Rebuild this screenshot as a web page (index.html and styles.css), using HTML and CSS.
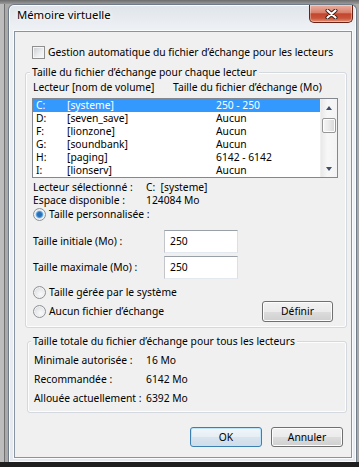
FILE: index.html
```html
<!DOCTYPE html>
<html lang="fr">
<head>
<meta charset="utf-8">
<title>Mémoire virtuelle</title>
<link rel="stylesheet" href="styles.css">
</head>
<body>
<div class="desk">
  <div class="window">
    <div class="titlebar">
      <span class="title">Mémoire virtuelle</span>
      <span class="close">
        <svg width="13" height="10" viewBox="0 0 13 10">
          <path d="M2.5 1.5 L10.5 8.5 M10.5 1.5 L2.5 8.5" stroke="#3a1c16" stroke-width="4" stroke-linecap="round"/>
          <path d="M2.5 1.5 L10.5 8.5 M10.5 1.5 L2.5 8.5" stroke="#ffffff" stroke-width="2.2" stroke-linecap="round"/>
        </svg>
      </span>
    </div>
    <div class="client">
      <div class="check-row"><span class="checkbox"></span><span>Gestion automatique du fichier d’échange pour les lecteurs</span></div>

      <fieldset class="group g1">
        <legend>Taille du fichier d’échange pour chaque lecteur</legend>
        <div class="list-head"><span class="h-drive">Lecteur [nom de volume]</span><span>Taille du fichier d’échange (Mo)</span></div>
        <div class="listbox">
          <div class="rows">
            <div class="row sel"><span class="c-letter">C:</span><span class="c-name">[systeme]</span><span>250 - 250</span></div>
            <div class="row"><span class="c-letter">D:</span><span class="c-name">[seven_save]</span><span>Aucun</span></div>
            <div class="row"><span class="c-letter">F:</span><span class="c-name">[lionzone]</span><span>Aucun</span></div>
            <div class="row"><span class="c-letter">G:</span><span class="c-name">[soundbank]</span><span>Aucun</span></div>
            <div class="row"><span class="c-letter">H:</span><span class="c-name">[paging]</span><span>6142 - 6142</span></div>
            <div class="row"><span class="c-letter">I:</span><span class="c-name">[lionserv]</span><span>Aucun</span></div>
          </div>
          <div class="scrollbar">
            <span class="sb-btn"><span class="tri up"></span></span>
            <span class="thumb"></span>
            <span class="sb-space"></span>
            <span class="sb-btn"><span class="tri down"></span></span>
          </div>
        </div>
        <div class="info"><span class="k">Lecteur sélectionné :</span><span>C:&nbsp; [systeme]</span></div>
        <div class="info"><span class="k">Espace disponible :</span><span>124084 Mo</span></div>
        <div class="radio-row r1"><span class="radio on"></span><span>Taille personnalisée :</span></div>
        <div class="field f1"><span class="f-label">Taille initiale (Mo) :</span><span class="input">250</span></div>
        <div class="field f2"><span class="f-label">Taille maximale (Mo) :</span><span class="input">250</span></div>
        <div class="radio-row r2"><span class="radio"></span><span>Taille gérée par le système</span></div>
        <div class="radio-row r3"><span class="radio"></span><span>Aucun fichier d’échange</span><span class="btn define">Définir</span></div>
      </fieldset>

      <fieldset class="group g2">
        <legend>Taille totale du fichier d’échange pour tous les lecteurs</legend>
        <div class="total"><span class="k2">Minimale autorisée :</span><span>16 Mo</span></div>
        <div class="total"><span class="k2">Recommandée :</span><span>6142 Mo</span></div>
        <div class="total"><span class="k2">Allouée actuellement :</span><span>6392 Mo</span></div>
      </fieldset>

      <div class="actions">
        <span class="btn default">OK</span>
        <span class="btn">Annuler</span>
      </div>
    </div>
  </div>
</div>
<div class="floor"></div>
</body>
</html>
```

FILE: styles.css
```css
* { box-sizing: border-box; }
html, body { margin: 0; padding: 0; }
body {
  width: 359px;
  height: 467px;
  overflow: hidden;
  background: #a9a9a9;
  font-family: "Noto Sans", "DejaVu Sans", sans-serif;
  font-size: 10.3px;
  line-height: 13px;
  color: #000;
}
.desk {
  height: 462px;
  padding: 4px 2px 0 8px;
  background:
    linear-gradient(#6c6c6c, #9a9a9a 4px, transparent 4px),
    linear-gradient(to right, #bdbdbd 0 4px, #707070 4px 5px, #aaaaaa 5px);
}
.floor { height: 5px; background: #1f1f1f; }

.window {
  width: 349px;
  height: 458px;
  border: 1px solid #6f7b88;
  border-bottom: none;
  border-radius: 6px 6px 0 0;
  background: linear-gradient(#dfe4ea, #eef1f4 24px, #ebeef2 60%, #e6eaee);
  box-shadow: inset 0 0 0 1px #fbfcfd;
  display: flex;
  flex-direction: column;
}
.titlebar {
  height: 26px;
  display: flex;
  align-items: flex-start;
  padding-left: 8px;
}
.title {
  font-size: 11.3px;
  line-height: 20px;
  color: #000;
  text-shadow: 0 0 6px #fff, 0 0 3px #fff;
}
.close {
  margin-left: auto;
  margin-right: 3px;
  width: 44px;
  height: 18px;
  border: 1px solid #6a2217;
  border-top: none;
  border-radius: 0 0 5px 5px;
  background: linear-gradient(#eab0a1, #d9806b 45%, #c3452d 52%, #c9553b 78%, #e39478);
  box-shadow: inset 0 0 0 1px rgba(255,255,255,.35);
  display: flex;
  align-items: center;
  justify-content: center;
}

.client {
  margin: 0 4px 4px 5px;
  height: 427px;
  border: 1px solid #8894a1;
  box-shadow: 0 0 0 1px #fafbfc;
  background: #f0f0f0;
  padding: 13px 4px 0 10px;
}

.check-row {
  display: flex;
  align-items: center;
  height: 14px;
  margin-left: 7px;
  gap: 3px;
}
.checkbox {
  width: 13px;
  height: 13px;
  border: 1px solid #8f8f8f;
  background: linear-gradient(135deg, #c9ccd0, #eceef0 60%, #fbfbfb);
  box-shadow: inset 0 0 0 1px #f6f6f6;
}

.group {
  margin: 0;
  border: 1px solid #d3d9de;
  border-radius: 3px;
  box-shadow: inset 0 0 0 1px #fdfdfd;
  min-width: 0;
}
.group legend {
  padding: 0 2px;
  margin-left: -3px;
  line-height: 14px;
  background: #f0f0f0;
}
.g1 {
  margin-top: 6px;
  padding: 2px 8px 5px 7px;
}
.list-head { display: flex; height: 14px; }
.h-drive { width: 140px; }

.listbox {
  margin: 3px 0 0 -1px;
  height: 80px;
  border: 1px solid #828790;
  background: #fff;
  display: flex;
}
.rows { flex: 1; }
.row { display: flex; height: 13px; line-height: 13px; padding-left: 3px; }
.row.sel { background: #3399ff; color: #fff; }
.c-letter { width: 31px; }
.c-name { width: 149px; }

.scrollbar {
  width: 17px;
  display: flex;
  flex-direction: column;
  background: linear-gradient(to right, #e9e9e9, #f7f7f7 40%, #f3f3f3);
  border-left: 1px solid #f0f0f0;
}
.sb-btn { height: 17px; display: flex; align-items: center; justify-content: center; }
.tri { width: 0; height: 0; border-left: 3.5px solid transparent; border-right: 3.5px solid transparent; }
.tri.up { border-bottom: 4px solid #404f66; }
.tri.down { border-top: 4px solid #404f66; }
.thumb {
  margin: 2px 1px 0 1px;
  height: 15px;
  border: 1px solid #979797;
  border-radius: 2px;
  background: linear-gradient(to right, #f6f6f6, #e9e9e9 50%, #d7d7d7);
  box-shadow: inset 0 0 0 1px #fdfdfd;
}
.sb-space { flex: 1; }

.info { display: flex; height: 13px; }
.listbox + .info { margin-top: 3px; }
.k { width: 113px; }

.radio-row { display: flex; align-items: center; height: 14px; gap: 3px; }
.r2 { margin-top: 6px; }
.r3 { margin-top: 2px; height: 21px; }
.radio {
  width: 13px;
  height: 13px;
  border-radius: 50%;
  border: 1px solid #8f9296;
  background: radial-gradient(circle at 60% 65%, #fafafa, #e4e6e8 55%, #c8cbcf);
  box-shadow: inset 0 0 0 1px #f3f3f3;
}
.radio.on {
  background: radial-gradient(circle, #2a6eb5 0 2px, #5aa8e8 3.2px, #e6eaee 4.2px, #cfd3d7);
}

.field { display: flex; align-items: center; height: 23px; }
.f1 { margin-top: 9px; }
.f2 { margin-top: 3px; }
.f-label { width: 131px; }
.input {
  width: 74px;
  height: 23px;
  border: 1px solid #abadb3;
  border-top-color: #9aa0a8;
  border-left-color: #c2c5ca;
  border-right-color: #dbdfe6;
  border-bottom-color: #e3e9ef;
  background: #fff;
  padding-left: 5px;
  line-height: 21px;
}

.btn {
  width: 72px;
  height: 20px;
  border: 1px solid #707070;
  border-radius: 3px;
  background: linear-gradient(#f2f2f2, #ebebeb 50%, #dddddd 50%, #cfcfcf);
  box-shadow: inset 0 0 0 1px #fcfcfc;
  display: flex;
  align-items: center;
  justify-content: center;
  line-height: 13px;
}
.define { margin-left: auto; margin-right: 5px; width: 71px; height: 21px; }

.g2 {
  margin-top: 6px;
  margin-left: 2px;
  padding: 3px 8px 4px 6px;
}
.total { display: flex; height: 19px; align-items: center; }
.k2 { width: 112px; }

.actions {
  display: flex;
  justify-content: flex-end;
  gap: 9px;
  margin-top: 14px;
  margin-right: 4px;
}
.btn.default {
  border-color: #3c7fb1;
  background: linear-gradient(#f1f6fa, #e6eef4 50%, #d8e4ee 50%, #cfdde9);
  box-shadow: inset 0 0 0 1px #bfe4f9;
}
```
